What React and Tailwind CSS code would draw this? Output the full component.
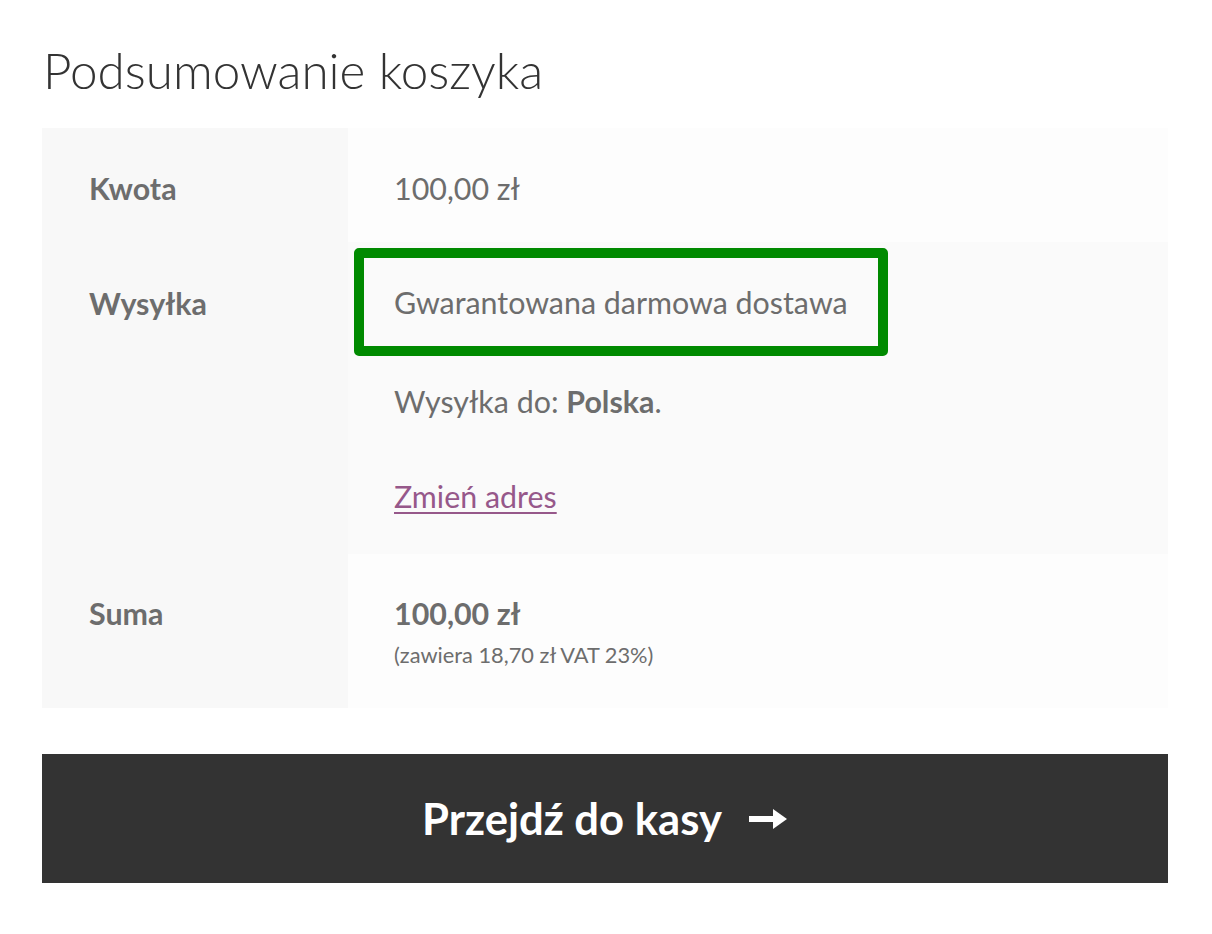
import React from "react";

export default function App() {
  return (
    <div className="min-h-screen bg-white pl-[42px] pr-[44px] pt-[38px] font-['Lato',sans-serif] text-[#6d6d6d]">
      {/* Heading */}
      <h2 className="ml-[1px] text-[49.4px] font-light leading-[64px] text-[#333333]">
        Podsumowanie koszyka
      </h2>

      {/* Totals table */}
      <div className="mt-[26px] flex flex-col text-[30.4px] leading-[36px]">
        {/* Kwota */}
        <div className="flex">
          <div className="w-[306px] shrink-0 bg-[#f8f8f8] px-[47px] pt-[42px] pb-[36px] font-bold">
            Kwota
          </div>
          <div className="flex-1 bg-[#fdfdfd] px-[46px] pt-[42px] pb-[36px]">
            100,00 zł
          </div>
        </div>

        {/* Wysyłka */}
        <div className="flex">
          <div className="w-[306px] shrink-0 bg-[#f8f8f8] px-[47px] pt-[43px] font-bold">
            Wysyłka
          </div>
          <div className="flex-1 bg-[#fafafa] pt-[6px] pl-[6px] pb-[40px]">
            <div className="inline-block rounded-[5px] border-[10px] border-[#008a00] px-[30px] py-[26px]">
              Gwarantowana darmowa dostawa
            </div>
            <div className="pl-[40px] pt-[27px]">
              Wysyłka do: <span className="font-bold">Polska</span>.
            </div>
            <div className="pl-[40px] pt-[59px]">
              <a href="#" className="text-[#96588a] underline underline-offset-[4px] decoration-[2px]">
                Zmień adres
              </a>
            </div>
          </div>
        </div>

        {/* Suma */}
        <div className="flex">
          <div className="w-[306px] shrink-0 bg-[#f8f8f8] px-[47px] pt-[41px] font-bold">
            Suma
          </div>
          <div className="flex-1 bg-[#fdfdfd] px-[46px] pt-[41px] pb-[39px]">
            <div className="font-bold">100,00 zł</div>
            <div className="mt-[10px] text-[21.8px] leading-[28px]">
              (zawiera 18,70 zł VAT 23%)
            </div>
          </div>
        </div>
      </div>

      {/* Checkout button */}
      <button className="mt-[46px] flex h-[129px] w-full items-center justify-center gap-[26px] bg-[#333333] text-[43.6px] font-bold text-white">
        <span>Przejdź do kasy</span>
        <svg width="40" height="24" viewBox="0 0 40 24" fill="none">
          <path d="M1 12h28" stroke="white" strokeWidth="6" />
          <path d="M25 2l14 10-14 10z" fill="white" />
        </svg>
      </button>
    </div>
  );
}
